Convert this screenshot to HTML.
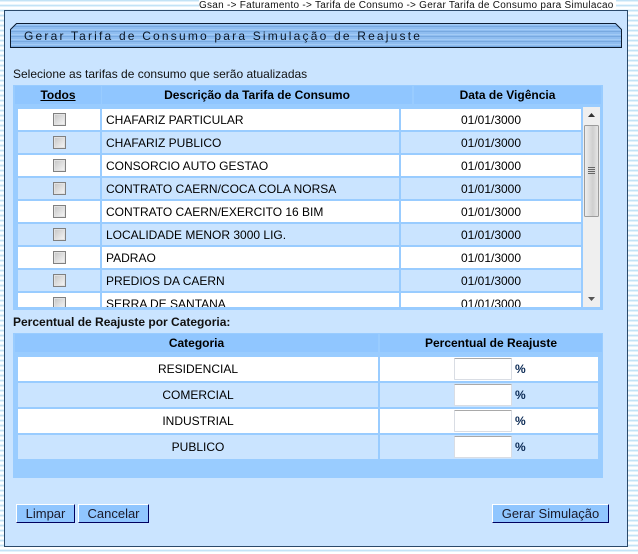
<!DOCTYPE html>
<html><head><meta charset="utf-8">
<style>
html,body{margin:0;padding:0;width:638px;height:554px;overflow:hidden;background:#fff}
body{position:relative;font-family:"Liberation Sans",Arial,sans-serif;font-size:12px;color:#000;
background:repeating-linear-gradient(180deg,#c3e3f6 0,#c3e3f6 1px,#e3f2fb 1px,#e3f2fb 2px,#fff 2px,#fff 4px,#e9f5fc 4px,#e9f5fc 5px)}
div,span{position:absolute;white-space:nowrap}
.crumb{left:199px;top:0;font-size:10px;letter-spacing:.265px;line-height:11px;color:#111;background:#fff;padding-right:2px}
.panel{left:4px;top:10px;width:622px;height:535px;background:#cae4ff;border:1px solid #2b4a6b;border-bottom-width:1.5px}
.c{text-align:center}
.hd{font-weight:bold;background:#90c6ff;line-height:18px;height:18px;text-align:center}
.wrap{background:#99ccff}
.r{height:21px;line-height:22px}
.w{background:#fff}.b{background:#cae4ff}
.cb{width:11px;height:11px;border:1px solid #808080;background:linear-gradient(135deg,#c4c4c4,#f7f7f7);box-shadow:inset 0 0 0 1px #e2e2e2}
.inp{left:454px;width:56px;height:20px;background:#fff;border:1px solid #d9dde4;border-top-color:#a9a9a9;border-radius:1px}
.pct{left:515px;font-weight:bold;font-size:12px;color:#0b2a55;line-height:12px}
.btn{height:17px;line-height:17px;background:#90c6ff;border:1px solid;border-color:#fff #000060 #000060 #fff;text-align:center;color:#1a1a2a;font-size:13px;top:504px}
</style></head><body>
<div class="crumb">Gsan -&gt; Faturamento -&gt; Tarifa de Consumo -&gt; Gerar Tarifa de Consumo para Simulacao</div>
<div class="panel"></div>

<svg style="position:absolute;left:10px;top:23px" width="612" height="25">
<defs><pattern id="p" width="20" height="5" patternUnits="userSpaceOnUse"><rect width="20" height="5" fill="#8fbdf0"/><rect y="3" width="20" height="1" fill="#78a9e0"/><rect y="1" width="20" height="1" fill="#a3cbf5"/></pattern></defs>
<path d="M.5 24.500V6.500L6.500 .5H605.500L611.500 6.500V24.500Z" fill="url(#p)" stroke="#0c1c30"/>
</svg>
<div style="left:24px;top:29px;font-size:12px;letter-spacing:2.19px;line-height:14px;color:#0a1626">Gerar Tarifa de Consumo para Simulação de Reajuste</div>

<div style="left:13px;top:67px;line-height:14px;color:#111">Selecione as tarifas de consumo que serão atualizadas</div>

<!-- table 1 -->
<div class="wrap" style="left:13px;top:85px;width:590px;height:225px"></div>
<div class="hd" style="left:15px;top:86px;width:86px;text-decoration:underline">Todos</div>
<div class="hd" style="left:102px;top:86px;width:310px">Descrição da Tarifa de Consumo</div>
<div class="hd" style="left:414px;top:86px;width:187px">Data de Vigência</div>
<div id="t1" style="left:0;top:0">
<div class="w" style="left:18px;top:109px;width:82px;height:21px"></div><div class="w r" style="left:102px;top:109px;width:293px;padding-left:4px">CHAFARIZ PARTICULAR</div><div class="w r c" style="left:401px;top:109px;width:180px">01/01/3000</div><div class="cb" style="left:53px;top:113px"></div>
<div class="b" style="left:18px;top:132px;width:82px;height:21px"></div><div class="b r" style="left:102px;top:132px;width:293px;padding-left:4px">CHAFARIZ PUBLICO</div><div class="b r c" style="left:401px;top:132px;width:180px">01/01/3000</div><div class="cb" style="left:53px;top:136px"></div>
<div class="w" style="left:18px;top:155px;width:82px;height:21px"></div><div class="w r" style="left:102px;top:155px;width:293px;padding-left:4px">CONSORCIO AUTO GESTAO</div><div class="w r c" style="left:401px;top:155px;width:180px">01/01/3000</div><div class="cb" style="left:53px;top:159px"></div>
<div class="b" style="left:18px;top:178px;width:82px;height:21px"></div><div class="b r" style="left:102px;top:178px;width:293px;padding-left:4px">CONTRATO CAERN/COCA COLA NORSA</div><div class="b r c" style="left:401px;top:178px;width:180px">01/01/3000</div><div class="cb" style="left:53px;top:182px"></div>
<div class="w" style="left:18px;top:201px;width:82px;height:21px"></div><div class="w r" style="left:102px;top:201px;width:293px;padding-left:4px">CONTRATO CAERN/EXERCITO 16 BIM</div><div class="w r c" style="left:401px;top:201px;width:180px">01/01/3000</div><div class="cb" style="left:53px;top:205px"></div>
<div class="b" style="left:18px;top:224px;width:82px;height:21px"></div><div class="b r" style="left:102px;top:224px;width:293px;padding-left:4px">LOCALIDADE MENOR 3000 LIG.</div><div class="b r c" style="left:401px;top:224px;width:180px">01/01/3000</div><div class="cb" style="left:53px;top:228px"></div>
<div class="w" style="left:18px;top:247px;width:82px;height:21px"></div><div class="w r" style="left:102px;top:247px;width:293px;padding-left:4px">PADRAO</div><div class="w r c" style="left:401px;top:247px;width:180px">01/01/3000</div><div class="cb" style="left:53px;top:251px"></div>
<div class="b" style="left:18px;top:270px;width:82px;height:21px"></div><div class="b r" style="left:102px;top:270px;width:293px;padding-left:4px">PREDIOS DA CAERN</div><div class="b r c" style="left:401px;top:270px;width:180px">01/01/3000</div><div class="cb" style="left:53px;top:274px"></div>
<div style="left:18px;top:293px;width:563px;height:14px;overflow:hidden;background:#99ccff">
<div class="w" style="left:0;top:0;width:82px;height:14px"></div><div class="w r" style="left:84px;top:0;width:293px;padding-left:4px">SERRA DE SANTANA</div><div class="w r c" style="left:383px;top:0;width:180px">01/01/3000</div><div class="cb" style="left:35px;top:4px"></div></div>
</div>

<!-- scrollbar -->
<div style="left:583px;top:107px;width:17px;height:200px;background:#efefef"></div>
<svg style="position:absolute;left:583px;top:107px" width="17" height="200">
<defs><linearGradient id="g"><stop offset="0" stop-color="#f0f0f0"/><stop offset=".6" stop-color="#cfcfcf"/><stop offset="1" stop-color="#e8e8e8"/></linearGradient></defs>
<path d="M5 10L8.500 6L12 10Z" fill="#333"/><path d="M5 190H12L8.500 194Z" fill="#555"/>
<rect x="1.500" y="18.500" width="14" height="91" rx="1" fill="url(#g)" stroke="#9c9c9c"/>
<path d="M5 60.500H12M5 62.500H12M5 64.500H12M5 66.500H12" stroke="#666"/>
</svg>

<div style="left:13px;top:315px;font-weight:bold;line-height:14px;color:#111">Percentual de Reajuste por Categoria:</div>

<!-- table 2 -->
<div class="wrap" style="left:13px;top:333px;width:590px;height:145px"></div>
<div class="hd" style="left:15px;top:334px;width:363px">Categoria</div>
<div class="hd" style="left:380px;top:334px;width:222px">Percentual de Reajuste</div>

<div class="w c" style="left:18px;top:357px;width:360px;height:24px;line-height:24px">RESIDENCIAL</div><div class="w" style="left:380px;top:357px;width:218px;height:24px"></div>
<div class="b c" style="left:18px;top:383px;width:360px;height:24px;line-height:24px">COMERCIAL</div><div class="b" style="left:380px;top:383px;width:218px;height:24px"></div>
<div class="w c" style="left:18px;top:409px;width:360px;height:24px;line-height:24px">INDUSTRIAL</div><div class="w" style="left:380px;top:409px;width:218px;height:24px"></div>
<div class="b c" style="left:18px;top:435px;width:360px;height:24px;line-height:24px">PUBLICO</div><div class="b" style="left:380px;top:435px;width:218px;height:24px"></div>

<div class="inp" style="top:358px"></div><div class="pct" style="top:363px">%</div>
<div class="inp" style="top:384px"></div><div class="pct" style="top:389px">%</div>
<div class="inp" style="top:410px"></div><div class="pct" style="top:415px">%</div>
<div class="inp" style="top:436px"></div><div class="pct" style="top:441px">%</div>

<div class="btn" style="left:16px;width:57px">Limpar</div>
<div class="btn" style="left:78px;width:69px">Cancelar</div>
<div class="btn" style="left:492px;width:115px">Gerar Simulação</div>
</body></html>
